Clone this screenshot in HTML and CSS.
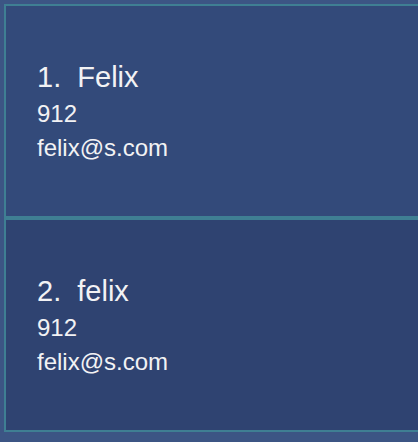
FILE: index.html
```html
<!DOCTYPE html>
<html>
<head>
<meta charset="utf-8">
<link rel="stylesheet" href="styles.css">
</head>
<body>
<div class="list">
  <div class="card card-odd">
    <div class="title">1.  Felix</div>
    <div class="line">912</div>
    <div class="line">felix@s.com</div>
  </div>
  <div class="card card-even">
    <div class="title">2.  felix</div>
    <div class="line">912</div>
    <div class="line">felix@s.com</div>
  </div>
</div>
</body>
</html>
```
FILE: styles.css
```css
html, body {
  margin: 0;
  padding: 0;
  overflow: hidden;
}
body {
  background: #3c5584;
  width: 418px;
  height: 442px;
  font-family: "Liberation Sans", Arial, sans-serif;
  color: #f2f2f4;
}
.list {
  margin: 4px 0 0 4px;
  width: 414px;
  display: flex;
  flex-direction: column;
}
.card {
  box-sizing: border-box;
  height: 214px;
  border: 2px solid #3f7f93;
  border-right: none;
  display: flex;
  flex-direction: column;
  justify-content: center;
  padding-left: 31px;
}
.card-odd {
  background: #334a7a;
}
.card-even {
  background: #2f4371;
}
.title {
  font-size: 29px;
  line-height: 40px;
  white-space: pre;
}
.line {
  font-size: 24px;
  line-height: 34px;
}
```
